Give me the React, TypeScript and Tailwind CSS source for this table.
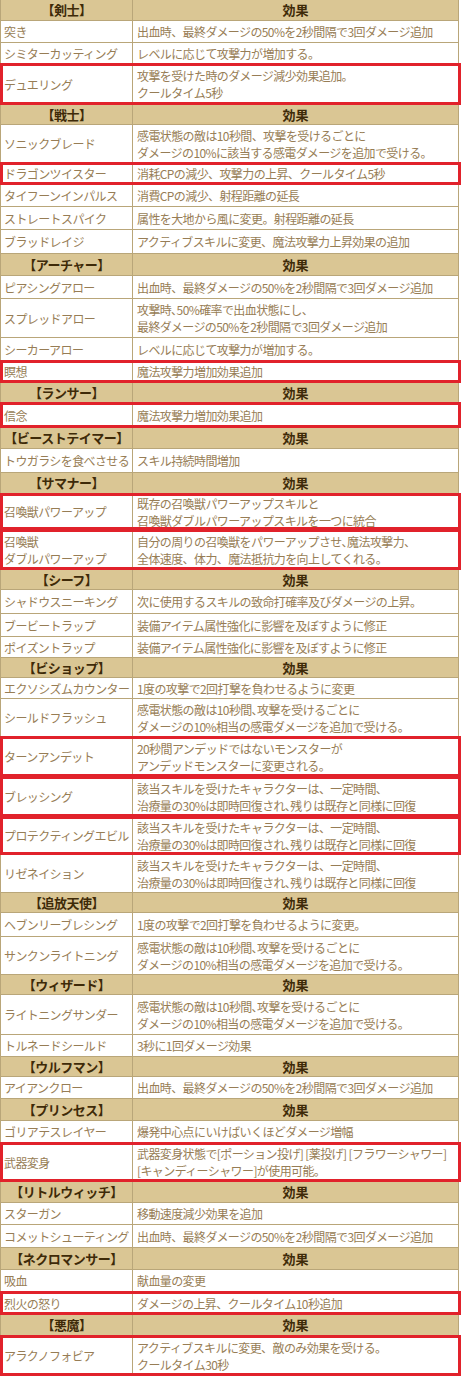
import React from "react";

type Row =
  | { h: string; header: true; name: string }
  | { h: string; header?: false; name: React.ReactNode; effect: React.ReactNode; red?: boolean };

const rows: Row[] = [
  { header: true, name: "【剣士】", h: "h-[21px]" },
  { name: "突き", effect: "出血時、最終ダメージの50%を2秒間隔で3回ダメージ追加", h: "h-[22px]" },
  { name: "シミターカッティング", effect: "レベルに応じて攻撃力が増加する。", h: "h-[21px]" },
  { name: "デュエリング", effect: <>攻撃を受けた時のダメージ減少効果追加。<br />クールタイム5秒</>, h: "h-[41px]", red: true },
  { header: true, name: "【戦士】", h: "h-[20px]" },
  { name: "ソニックブレード", effect: <>感電状態の敵は10秒間、攻撃を受けるごとに<br />ダメージの10%に該当する感電ダメージを追加で受ける。</>, h: "h-[38px]" },
  { name: "ドラゴンツイスター", effect: "消耗CPの減少、攻撃力の上昇、クールタイム5秒", h: "h-[22px]", red: true },
  { name: "タイフーンインパルス", effect: "消費CPの減少、射程距離の延長", h: "h-[22px]" },
  { name: "ストレートスパイク", effect: "属性を大地から風に変更。射程距離の延長", h: "h-[23px]" },
  { name: "ブラッドレイジ", effect: "アクティブスキルに変更、魔法攻撃力上昇効果の追加", h: "h-[24px]" },
  { header: true, name: "【アーチャー】", h: "h-[22px]" },
  { name: "ピアシングアロー", effect: "出血時、最終ダメージの50%を2秒間隔で3回ダメージ追加", h: "h-[23px]" },
  { name: "スプレッドアロー", effect: <>攻撃時､50%確率で出血状態にし、<br />最終ダメージの50%を2秒間隔で3回ダメージ追加</>, h: "h-[39px]" },
  { name: "シーカーアロー", effect: "レベルに応じて攻撃力が増加する。", h: "h-[23px]" },
  { name: "瞑想", effect: "魔法攻撃力増加効果追加", h: "h-[22px]", red: true },
  { header: true, name: "【ランサー】", h: "h-[20px]" },
  { name: "信念", effect: "魔法攻撃力増加効果追加", h: "h-[25px]", red: true },
  { header: true, name: "【ビーストテイマー】", h: "h-[21px]" },
  { name: "トウガラシを食べさせる", effect: "スキル持続時間増加", h: "h-[24px]" },
  { header: true, name: "【サマナー】", h: "h-[21px]" },
  { name: "召喚獣パワーアップ", effect: <>既存の召喚獣パワーアップスキルと<br />召喚獣ダブルパワーアップスキルを一つに統合</>, h: "h-[36px]", red: true },
  { name: <>召喚獣<br />ダブルパワーアップ</>, effect: <>自分の周りの召喚獣をパワーアップさせ､魔法攻撃力、<br />全体速度、体力、魔法抵抗力を向上してくれる。</>, h: "h-[40px]", red: true },
  { header: true, name: "【シーフ】", h: "h-[20px]" },
  { name: "シャドウスニーキング", effect: "次に使用するスキルの致命打確率及びダメージの上昇。", h: "h-[24px]" },
  { name: "ブービートラップ", effect: "装備アイテム属性強化に影響を及ぼすように修正", h: "h-[23px]" },
  { name: "ポイズントラップ", effect: "装備アイテム属性強化に影響を及ぼすように修正", h: "h-[21px]" },
  { header: true, name: "【ビショップ】", h: "h-[20px]" },
  { name: "エクソシズムカウンター", effect: "1度の攻撃で2回打撃を負わせるように変更", h: "h-[21px]" },
  { name: "シールドフラッシュ", effect: <>感電状態の敵は10秒間､攻撃を受けるごとに<br />ダメージの10%相当の感電ダメージを追加で受ける。</>, h: "h-[38px]" },
  { name: "ターンアンデット", effect: <>20秒間アンデッドではないモンスターが<br />アンデッドモンスターに変更される。</>, h: "h-[40px]", red: true },
  { name: "ブレッシング", effect: <>該当スキルを受けたキャラクターは、一定時間､<br />治療量の30%は即時回復され､残りは既存と同様に回復</>, h: "h-[40px]", red: true },
  { name: "プロテクティングエビル", effect: <>該当スキルを受けたキャラクターは、一定時間､<br />治療量の30%は即時回復され､残りは既存と同様に回復</>, h: "h-[38px]", red: true },
  { name: "リゼネイション", effect: <>該当スキルを受けたキャラクターは、一定時間､<br />治療量の30%は即時回復され､残りは既存と同様に回復</>, h: "h-[38px]" },
  { header: true, name: "【追放天使】", h: "h-[20px]" },
  { name: "ヘブンリーブレシング", effect: "1度の攻撃で2回打撃を負わせるように変更。", h: "h-[24px]" },
  { name: "サンクンライトニング", effect: <>感電状態の敵は10秒間､攻撃を受けるごとに<br />ダメージの10%相当の感電ダメージを追加で受ける。</>, h: "h-[38px]" },
  { header: true, name: "【ウィザード】", h: "h-[20px]" },
  { name: "ライトニングサンダー", effect: <>感電状態の敵は10秒間､攻撃を受けるごとに<br />ダメージの10%相当の感電ダメージを追加で受ける。</>, h: "h-[40px]" },
  { name: "トルネードシールド", effect: "3秒に1回ダメージ効果", h: "h-[22px]" },
  { header: true, name: "【ウルフマン】", h: "h-[20px]" },
  { name: "アイアンクロー", effect: "出血時、最終ダメージの50%を2秒間隔で3回ダメージ追加", h: "h-[22px]" },
  { header: true, name: "【プリンセス】", h: "h-[22px]" },
  { name: "ゴリアテスレイヤー", effect: "爆発中心点にいけばいくほどダメージ増幅", h: "h-[22px]" },
  { name: "武器変身", effect: <>武器変身状態で[ポーション投げ] [薬投げ] [フラワーシャワー]<br />[キャンディーシャワー]が使用可能。</>, h: "h-[39px]", red: true },
  { header: true, name: "【リトルウィッチ】", h: "h-[21px]" },
  { name: "スターガン", effect: "移動速度減少効果を追加", h: "h-[22px]" },
  { name: "コメットシューティング", effect: "出血時、最終ダメージの50%を2秒間隔で3回ダメージ追加", h: "h-[23px]" },
  { header: true, name: "【ネクロマンサー】", h: "h-[22px]" },
  { name: "吸血", effect: "献血量の変更", h: "h-[22px]" },
  { name: "烈火の怒り", effect: "ダメージの上昇、クールタイム10秒追加", h: "h-[23px]", red: true },
  { header: true, name: "【悪魔】", h: "h-[21px]" },
  { name: "アラクノフォビア", effect: <>アクティブスキルに変更、敵のみ効果を受ける。<br />クールタイム30秒</>, h: "h-[40px]", red: true },
];

export default function App() {
  return (
    <div
      className="w-[462px] h-[1376px] bg-white overflow-hidden"
      style={{ fontFamily: '"Noto Sans CJK JP", "Noto Sans", sans-serif' }}
    >
      <div className="w-[459px] flex flex-col border-l border-r border-[#b9a679]">
        {rows.map((r, i) =>
          r.header ? (
            <div
              key={i}
              className={`${r.h} grid grid-cols-[132px_1fr] bg-[#dac694] border-b border-[#b9a679] text-[#3e2a08] font-bold text-[13px]`}
            >
              <div className="flex items-center justify-center border-r border-[#b9a679] tracking-[-0.5px]">{r.name}</div>
              <div className="flex items-center justify-center">効果</div>
            </div>
          ) : (
            <div
              key={i}
              className={`${r.h} relative grid grid-cols-[132px_1fr] bg-white border-b border-[#b9a679] text-[#977d55] text-[12px] leading-[17px] tracking-[-0.6px]`}
            >
              <div className="flex items-center pl-[3px] border-r border-[#b9a679] whitespace-nowrap overflow-hidden">{r.name}</div>
              <div className="flex items-center pl-[4px] whitespace-nowrap overflow-hidden">{r.effect}</div>
              {r.red && (
                <div className="absolute -top-[1px] -bottom-[1px] -left-[1px] -right-[3px] border-[3px] border-[#e1222b] pointer-events-none" />
              )}
            </div>
          )
        )}
      </div>
    </div>
  );
}
